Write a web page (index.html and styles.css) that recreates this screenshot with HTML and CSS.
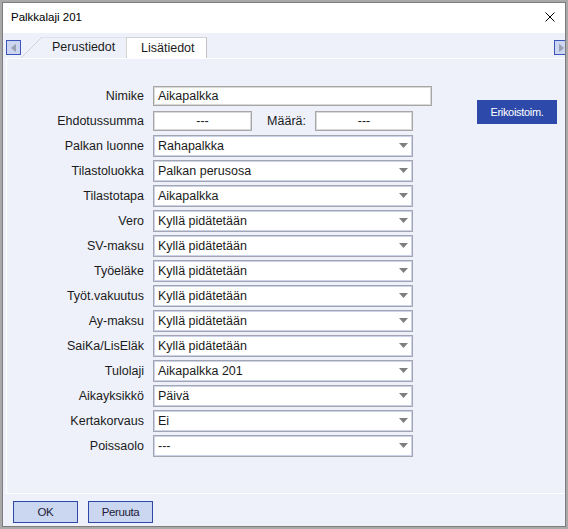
FILE: index.html
```html
<!DOCTYPE html>
<html lang="fi">
<head>
<meta charset="utf-8">
<title>Palkkalaji 201</title>
<link rel="stylesheet" href="styles.css">
</head>
<body>
<div class="dialog">
  <div class="titlebar">
    <span class="title">Palkkalaji 201</span>
    <svg class="close" width="10" height="10" viewBox="0 0 10 10"><path d="M0.5 0.5L9.5 9.5M9.5 0.5L0.5 9.5" stroke="#000" stroke-width="1" fill="none"/></svg>
  </div>
  <div class="tabstrip">
    <div class="scroll-btn left"><svg width="5" height="8" viewBox="0 0 5 8"><path d="M4.5 0.5L0.5 4L4.5 7.5Z" fill="#9aa0b4" stroke="#8a90a4" stroke-width="0.6"/></svg></div>
    <div class="tab inactive">Perustiedot</div>
    <div class="tab active">Lisätiedot</div>
    <div class="scroll-btn right"><svg width="5" height="8" viewBox="0 0 5 8"><path d="M0.5 0.5L4.5 4L0.5 7.5Z" fill="#9aa0b4" stroke="#8a90a4" stroke-width="0.6"/></svg></div>
  </div>
  <div class="panel">
    <div class="form">
      <div class="label">Nimike</div>
      <div class="input wide">Aikapalkka</div>

      <div class="label">Ehdotussumma</div>
      <div class="pair">
        <div class="input num">---</div>
        <span class="sublabel">Määrä:</span>
        <div class="input num">---</div>
      </div>

      <div class="label">Palkan luonne</div>
      <div class="select"><span>Rahapalkka</span><svg class="arrow" width="9" height="5" viewBox="0 0 9 5"><path d="M0 0H9L4.5 5Z" fill="#7f7f7f"/></svg></div>

      <div class="label">Tilastoluokka</div>
      <div class="select"><span>Palkan perusosa</span><svg class="arrow" width="9" height="5" viewBox="0 0 9 5"><path d="M0 0H9L4.5 5Z" fill="#7f7f7f"/></svg></div>

      <div class="label">Tilastotapa</div>
      <div class="select"><span>Aikapalkka</span><svg class="arrow" width="9" height="5" viewBox="0 0 9 5"><path d="M0 0H9L4.5 5Z" fill="#7f7f7f"/></svg></div>

      <div class="label">Vero</div>
      <div class="select"><span>Kyllä pidätetään</span><svg class="arrow" width="9" height="5" viewBox="0 0 9 5"><path d="M0 0H9L4.5 5Z" fill="#7f7f7f"/></svg></div>

      <div class="label">SV-maksu</div>
      <div class="select"><span>Kyllä pidätetään</span><svg class="arrow" width="9" height="5" viewBox="0 0 9 5"><path d="M0 0H9L4.5 5Z" fill="#7f7f7f"/></svg></div>

      <div class="label">Työeläke</div>
      <div class="select"><span>Kyllä pidätetään</span><svg class="arrow" width="9" height="5" viewBox="0 0 9 5"><path d="M0 0H9L4.5 5Z" fill="#7f7f7f"/></svg></div>

      <div class="label">Työt.vakuutus</div>
      <div class="select"><span>Kyllä pidätetään</span><svg class="arrow" width="9" height="5" viewBox="0 0 9 5"><path d="M0 0H9L4.5 5Z" fill="#7f7f7f"/></svg></div>

      <div class="label">Ay-maksu</div>
      <div class="select"><span>Kyllä pidätetään</span><svg class="arrow" width="9" height="5" viewBox="0 0 9 5"><path d="M0 0H9L4.5 5Z" fill="#7f7f7f"/></svg></div>

      <div class="label">SaiKa/LisEläk</div>
      <div class="select"><span>Kyllä pidätetään</span><svg class="arrow" width="9" height="5" viewBox="0 0 9 5"><path d="M0 0H9L4.5 5Z" fill="#7f7f7f"/></svg></div>

      <div class="label">Tulolaji</div>
      <div class="select"><span>Aikapalkka 201</span><svg class="arrow" width="9" height="5" viewBox="0 0 9 5"><path d="M0 0H9L4.5 5Z" fill="#7f7f7f"/></svg></div>

      <div class="label">Aikayksikkö</div>
      <div class="select"><span>Päivä</span><svg class="arrow" width="9" height="5" viewBox="0 0 9 5"><path d="M0 0H9L4.5 5Z" fill="#7f7f7f"/></svg></div>

      <div class="label">Kertakorvaus</div>
      <div class="select"><span>Ei</span><svg class="arrow" width="9" height="5" viewBox="0 0 9 5"><path d="M0 0H9L4.5 5Z" fill="#7f7f7f"/></svg></div>

      <div class="label">Poissaolo</div>
      <div class="select"><span>---</span><svg class="arrow" width="9" height="5" viewBox="0 0 9 5"><path d="M0 0H9L4.5 5Z" fill="#7f7f7f"/></svg></div>
    </div>
    <button class="special">Erikoistoim.</button>
  </div>
  <div class="footer">
    <button class="btn">OK</button>
    <button class="btn">Peruuta</button>
  </div>
</div>
</body>
</html>
```

FILE: styles.css
```css
html, body {
  margin: 0;
  padding: 0;
}
body {
  width: 568px;
  height: 529px;
  overflow: hidden;
  background: #a9a9a9;
  font-family: "Liberation Sans", Arial, sans-serif;
  font-size: 12.5px;
  color: #1b1b1b;
}
.dialog {
  margin: 2px 0 0 2px;
  width: 562px;
  height: 523px;
  border: 1px solid #7d7d7d;
  background: #eef1fa;
  overflow: hidden;
  display: flex;
  flex-direction: column;
}
.titlebar {
  height: 30px;
  flex: none;
  background: #ffffff;
  display: flex;
  align-items: center;
  justify-content: space-between;
  padding: 0 10px 0 8px;
}
.title {
  font-size: 11.5px;
  color: #000;
  margin-top: -2px;
}
.close {
  display: block;
  margin-top: -2px;
}
.tabstrip {
  height: 25px;
  flex: none;
  display: flex;
  align-items: flex-end;
  background: #eef1fa;
}
.scroll-btn {
  align-self: flex-start;
  margin-top: 7px;
  width: 13px;
  height: 13px;
  border: 1px solid #3c55bd;
  background: #cdd6f0;
  display: flex;
  align-items: center;
  justify-content: center;
  flex: none;
}
.scroll-btn svg {
  display: block;
}
.scroll-btn.left {
  margin-left: 3px;
}
.scroll-btn.right {
  margin-left: auto;
  margin-right: -4px;
}
.tab {
  height: 21px;
  line-height: 21px;
  box-sizing: border-box;
  white-space: nowrap;
}
.tab.inactive {
  width: 105px;
  padding-left: 31px;
  background:
    linear-gradient(#dfe3ee, #dfe3ee) no-repeat 21px 0 / calc(100% - 21px) 1px,
    linear-gradient(to top left, transparent calc(50% - 0.7px), #cfd3de 50%, transparent calc(50% + 0.7px)) no-repeat 0 0 / 21px 21px;
}
.tab.active {
  width: 81px;
  padding-left: 14px;
  background: #ffffff;
  border: 1px solid #d3d3d3;
  border-right-color: #c2c2c2;
  border-bottom: none;
  line-height: 20px;
}
.panel {
  flex: none;
  height: 434px;
  margin-left: 3px;
  border-top: 1px solid #ffffff;
  border-left: 1px solid #ffffff;
  border-bottom: 1px solid #ffffff;
  display: flex;
  align-items: flex-start;
  padding-top: 24px;
  box-sizing: content-box;
  height: 410px;
}
.form {
  display: grid;
  grid-template-columns: 137px 279px;
  grid-auto-rows: 25px;
  column-gap: 9px;
  align-items: center;
}
.label {
  text-align: right;
  white-space: nowrap;
}
.input {
  box-sizing: border-box;
  height: 20px;
  background: #ffffff;
  border: 1px solid #a6a6a6;
  box-shadow: inset 0 0 0 1px #d9d9d9;
  padding: 0 4px;
  line-height: 18px;
  white-space: nowrap;
}
.input.wide {
  width: 279px;
}
.pair {
  display: flex;
  align-items: center;
  width: 260px;
}
.input.num {
  width: 99px;
  text-align: center;
  flex: none;
}
.pair .input.num:last-child {
  width: 98px;
}
.sublabel {
  flex: 1;
  text-align: right;
  padding-right: 9px;
}
.select {
  box-sizing: border-box;
  width: 260px;
  height: 22px;
  background: #ffffff;
  border: 1px solid #a3a6b0;
  box-shadow: inset 0 0 0 1px #cbd3ea;
  display: flex;
  align-items: center;
  justify-content: space-between;
  padding: 0 4px 0 4px;
  white-space: nowrap;
}
.arrow {
  display: block;
  flex: none;
}
.special {
  margin: 17px 0 0 45px;
  width: 80px;
  height: 24px;
  border: none;
  background: #2d4aab;
  color: #ffffff;
  font-family: "Liberation Sans", Arial, sans-serif;
  font-size: 11px;
  letter-spacing: -0.3px;
  padding: 0;
}
.footer {
  flex: 1;
  display: flex;
  gap: 10px;
  padding: 7px 0 0 10px;
  align-items: flex-start;
}
.btn {
  width: 65px;
  height: 22px;
  box-sizing: border-box;
  border: 1px solid #2f47a8;
  background: #cbd6f0;
  color: #1c1c3a;
  font-family: "Liberation Sans", Arial, sans-serif;
  font-size: 11.5px;
  letter-spacing: -0.4px;
  padding: 0;
}
```
